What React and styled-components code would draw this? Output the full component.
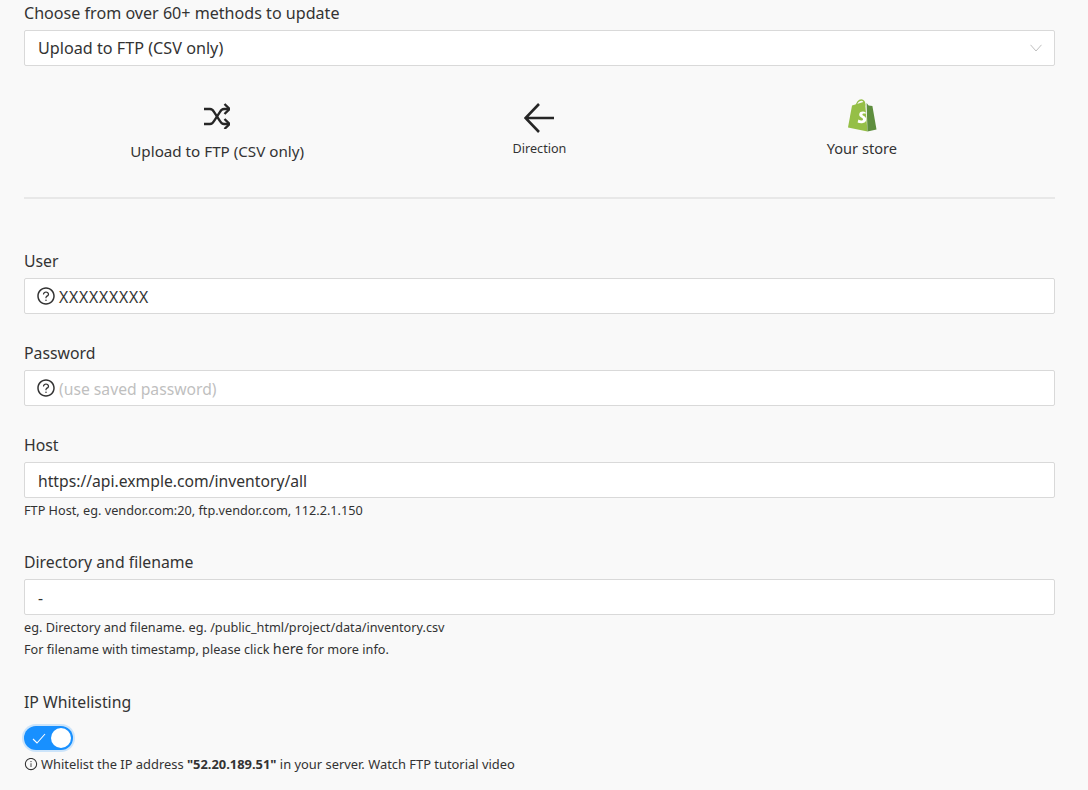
import React, { useState } from "react";
import styled, { createGlobalStyle } from "styled-components";
import { AiOutlineQuestionCircle, AiOutlineInfoCircle } from "react-icons/ai";

const Global = createGlobalStyle`
  html, body { margin: 0; padding: 0; background: #f9f9f9; }
  body { font-family: "Noto Sans", "Open Sans", sans-serif; color: #333; }
`;

const Page = styled.div`
  width: 1031px;
  height: 789px;
  padding: 1px 33px 0 24px;
  overflow: hidden;
`;

const Label = styled.label`
  display: block;
  font-size: ${(p) => p.$size || 15.8}px;
  line-height: 24px;
  margin-bottom: ${(p) => p.$gap || 5}px;
  color: #333;
`;

const Box = styled.div`
  height: 36px;
  box-sizing: border-box;
  display: flex;
  align-items: center;
  padding: ${(p) => (p.$select ? 0 : 1)}px 13px 0;
  background: #fff;
  border: 1px solid #d9d9d9;
  border-radius: 2px;
  font-size: ${(p) => (p.$select ? 16.2 : 15.7)}px;
  color: ${(p) => (p.$muted ? "#bfbfbf" : "#333")};
`;

const Value = styled.span`
  flex: 1;
  letter-spacing: ${(p) => p.$spacing || 0}px;
`;

const HelpIcon = styled(AiOutlineQuestionCircle)`
  width: 20px;
  height: 20px;
  margin: -1px 3px 0 -2px;
  color: #333;
`;

const Chevron = styled.svg`
  width: 12px;
  height: 8px;
  margin-right: -1px;
`;

const FlowRow = styled.div`
  display: grid;
  grid-template-columns: repeat(3, 1fr);
  padding: 0 32px;
  height: 131px;
  border-bottom: 2px solid #e8e8e8;
  margin-bottom: 50px;
`;

const FlowItem = styled.div`
  display: flex;
  flex-direction: column;
  align-items: center;
  padding-top: 33px;
  font-size: ${(p) => p.$size}px;
  line-height: 20px;
  color: #333;
`;

const IconSlot = styled.div`
  height: ${(p) => p.$h}px;
  box-sizing: border-box;
  padding-top: ${(p) => p.$top || 0}px;
  color: #262626;
  svg { display: block; }
`;

const Field = styled.div`
  margin-bottom: ${(p) => p.$gap}px;
`;

const Help = styled.div`
  font-size: 12.7px;
  line-height: 22px;
  color: #333;
  margin-top: ${(p) => p.$top || 0}px;
`;

const Link = styled.a`
  font-size: 14.3px;
  line-height: 1;
  color: #333;
`;

const Toggle = styled.button`
  display: flex;
  align-items: center;
  justify-content: space-between;
  width: 49px;
  height: 24px;
  padding: 0 2px 0 8px;
  border: 0;
  border-radius: 12px;
  background: #1890ff;
  box-shadow: 0 0 0 2px rgba(24, 144, 255, 0.2);
  cursor: pointer;
`;

const Knob = styled.span`
  width: 20px;
  height: 20px;
  border-radius: 50%;
  background: #fff;
`;

const Note = styled.div`
  display: flex;
  align-items: center;
  gap: 3px;
  font-size: 12.9px;
  line-height: 20px;
  margin-top: 4px;
  color: #333;
`;

const ShuffleIcon = () => (
  <svg width="26" height="26" viewBox="0 0 26 26" fill="none" stroke="currentColor" strokeWidth="2.3">
    <path d="M0 6h6c2 0 3 1 4 3l6 9c1 2 2 3 4 3h5" />
    <path d="M0 21h6c2 0 3-1 4-3l6-9c1-2 2-3 4-3h5" />
    <path d="M20.5 1l5 5-5 5M20.5 16l5 5-5 5" />
  </svg>
);

const ArrowIcon = () => (
  <svg width="30" height="30" viewBox="0 0 30 30" fill="none" stroke="currentColor" strokeWidth="2.6">
    <path d="M30 15H2M15 1 1.5 15 15 29" />
  </svg>
);

const ShopifyLogo = () => (
  <svg width="30" height="33" viewBox="0 0 30 33">
    <path d="M1 28.5 5 6.6 18 2.6 20.5 32.4Z" fill="#95bf47" />
    <path d="M20.5 32.4 29.5 30.4 25.4 7 21.6 6.4 19.6 4Z" fill="#5e8e3e" />
    <path d="M9 8.5C9 3.5 12 1 14.4 1c2 0 3.2 2 3.4 5.5" fill="none" stroke="#95bf47" strokeWidth="1.3" />
    <path d="M18.6 13.2c-2-1-6.2-1-6.4 2.2-.2 3 4 3 3.8 5 -.2 1.6-2.8 1.2-4.6.2l-.8 2.8c2.8 1.4 8.4 1.2 8.6-3 .2-3.4-3.8-3.6-3.8-5 0-1.2 1.8-1.2 3.4-.6Z" fill="#fff" />
  </svg>
);

export default function App() {
  const [whitelisted, setWhitelisted] = useState(true);

  return (
    <Page>
      <Global />
      <Label as="div" $size={16.1}>Choose from over 60+ methods to update</Label>
      <Box $select>
        <Value>Upload to FTP (CSV only)</Value>
        <Chevron viewBox="0 0 12 8">
          <path d="M.5.8 6 7 11.5.8" fill="none" stroke="#bfbfbf" strokeWidth="1" />
        </Chevron>
      </Box>

      <FlowRow>
        <FlowItem $size={15.2}>
          <IconSlot $h={42} $top={4}><ShuffleIcon /></IconSlot>
          Upload to FTP (CSV only)
        </FlowItem>
        <FlowItem $size={12.6}>
          <IconSlot $h={40} $top={4}><ArrowIcon /></IconSlot>
          Direction
        </FlowItem>
        <FlowItem $size={14.6}>
          <IconSlot $h={39}><ShopifyLogo /></IconSlot>
          Your store
        </FlowItem>
      </FlowRow>

      <Field $gap={27}>
        <Label>User</Label>
        <Box>
          <HelpIcon />
          <Value $spacing={0.8}>XXXXXXXXX</Value>
        </Box>
      </Field>

      <Field $gap={27}>
        <Label>Password</Label>
        <Box $muted>
          <HelpIcon />
          <Value>(use saved password)</Value>
        </Box>
      </Field>

      <Field $gap={29}>
        <Label>Host</Label>
        <Box><Value>https://api.exmple.com/inventory/all</Value></Box>
        <Help $top={1}>FTP Host, eg. vendor.com:20, ftp.vendor.com, 112.2.1.150</Help>
      </Field>

      <Field $gap={30}>
        <Label>Directory and filename</Label>
        <Box><Value>-</Value></Box>
        <Help $top={1}>eg. Directory and filename. eg. /public_html/project/data/inventory.csv</Help>
        <Help>For filename with timestamp, please click <Link>here</Link> for more info.</Help>
      </Field>

      <Field $gap={0}>
        <Label $gap={12}>IP Whitelisting</Label>
        <Toggle onClick={() => setWhitelisted(!whitelisted)}>
          <svg width="14" height="11" viewBox="0 0 14 11">
            <path d="M1 6 5 10 13 1" fill="none" stroke="#fff" strokeWidth="1.1" />
          </svg>
          <Knob />
        </Toggle>
        <Note>
          <AiOutlineInfoCircle size={14} />
          <span>Whitelist the IP address <b>"52.20.189.51"</b> in your server. Watch FTP tutorial video</span>
        </Note>
      </Field>
    </Page>
  );
}
